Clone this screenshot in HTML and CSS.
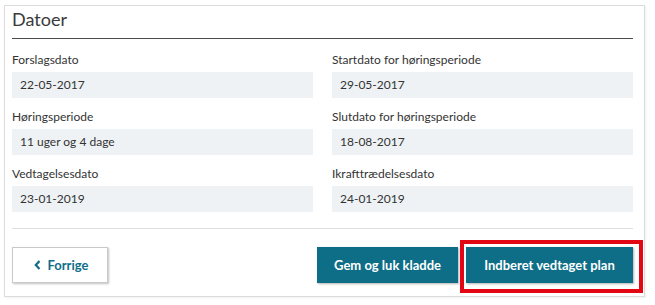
FILE: index.html
```html
<!DOCTYPE html>
<html lang="da">
<head>
<meta charset="utf-8">
<title>Datoer</title>
<link rel="stylesheet" href="styles.css">
</head>
<body>
<section class="card">
  <h2 class="card-title">Datoer</h2>
  <div class="fields">
    <div class="field">
      <label class="field-label">Forslagsdato</label>
      <div class="field-value">22-05-2017</div>
    </div>
    <div class="field">
      <label class="field-label">Startdato for høringsperiode</label>
      <div class="field-value">29-05-2017</div>
    </div>
    <div class="field">
      <label class="field-label">Høringsperiode</label>
      <div class="field-value">11 uger og 4 dage</div>
    </div>
    <div class="field">
      <label class="field-label">Slutdato for høringsperiode</label>
      <div class="field-value">18-08-2017</div>
    </div>
    <div class="field">
      <label class="field-label">Vedtagelsesdato</label>
      <div class="field-value">23-01-2019</div>
    </div>
    <div class="field">
      <label class="field-label">Ikrafttrædelsesdato</label>
      <div class="field-value">24-01-2019</div>
    </div>
  </div>
  <div class="actions">
    <button class="btn btn-secondary" type="button">
      <svg class="chev" width="7" height="10" viewBox="0 0 7 10" aria-hidden="true"><path d="M5.5 1 L1.8 5 L5.5 9" fill="none" stroke="currentColor" stroke-width="2.2"/></svg>
      Forrige
    </button>
    <div class="actions-right">
      <button class="btn btn-primary btn-gem" type="button">Gem og luk kladde</button>
      <div class="highlight-wrap">
        <button class="btn btn-primary btn-submit" type="button">Indberet vedtaget plan</button>
        <span class="highlight"></span>
      </div>
    </div>
  </div>
</section>
</body>
</html>
```

FILE: styles.css
```css
* { box-sizing: border-box; }
html, body { margin: 0; padding: 0; background: #fff; }
body {
  font-family: Lato, "Open Sans", "Liberation Sans", sans-serif;
  color: #333;
  width: 655px;
  height: 305px;
  overflow: hidden;
}
.card {
  margin: 5px 0 0 4px;
  width: 641px;
  height: 292px;
  border: 1px solid #dcdcdc;
  box-shadow: 1px 1px 2px rgba(0,0,0,0.06);
  padding: 0 11px 0 7px;
  display: flex;
  flex-direction: column;
}
.card-title {
  margin: 0;
  height: 33px;
  padding-top: 2px;
  font-size: 18px;
  font-weight: 400;
  line-height: 22px;
  color: #3a3a3a;
  border-bottom: 1px solid #4a4a4a;
}
.fields {
  display: grid;
  grid-template-columns: 301px 301px;
  column-gap: 19px;
  row-gap: 11px;
  padding-top: 13px;
  padding-bottom: 16px;
  border-bottom: 1px solid #dedede;
}
.field { display: flex; flex-direction: column; }
.field-label {
  font-size: 12px;
  line-height: 16px;
  height: 16px;
  margin-bottom: 4px;
  color: #333;
}
.field-value {
  height: 26px;
  background: #eef2f5;
  padding-left: 8px;
  font-size: 12px;
  line-height: 26px;
  color: #333;
}
.actions {
  display: flex;
  justify-content: space-between;
  align-items: flex-start;
  padding-top: 18px;
}
.actions-right { display: flex; gap: 8px; }
.btn {
  height: 36px;
  font-family: Lato, "Open Sans", "Liberation Sans", sans-serif;
  font-size: 13px;
  font-weight: 700;
  border-radius: 0;
  cursor: pointer;
  display: inline-flex;
  align-items: center;
  justify-content: center;
}
.btn-secondary {
  width: 96px;
  background: #fff;
  color: #0f6e88;
  border: 1px solid #c9c9c9;
  box-shadow: 1px 1px 2px rgba(0,0,0,0.25);
  gap: 7px;
  padding: 0 0 0 2px;
}
.chev { display: block; }
.btn-primary {
  background: #0e6d87;
  color: #fff;
  border: none;
  box-shadow: 1px 1px 2px rgba(0,0,0,0.3);
}
.btn-gem { width: 141px; }
.btn-submit { width: 167px; }
.highlight-wrap { position: relative; }
.highlight {
  position: absolute;
  left: -6px;
  top: -7px;
  right: -10px;
  bottom: -10px;
  border: 4px solid #e30613;
  pointer-events: none;
}
```
